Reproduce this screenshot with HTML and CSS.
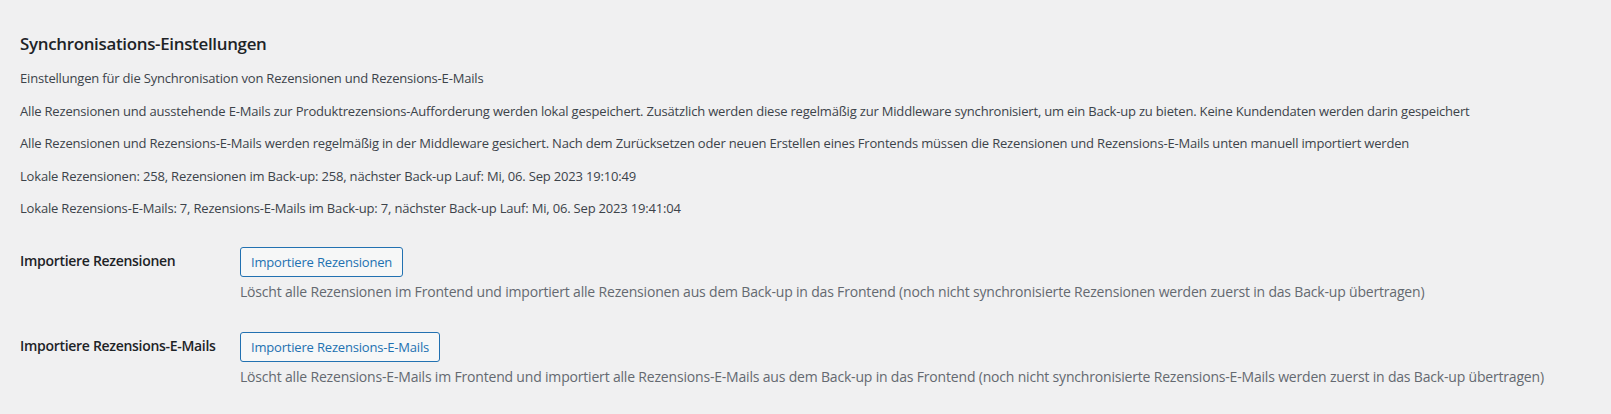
FILE: index.html
```html
<!DOCTYPE html>
<html lang="de">
<head>
<meta charset="utf-8">
<title>Synchronisations-Einstellungen</title>
<link rel="stylesheet" href="styles.css">
</head>
<body>
<div class="wrap">
  <h2 class="title">Synchronisations-Einstellungen</h2>
  <p>Einstellungen für die Synchronisation von Rezensionen und Rezensions-E-Mails</p>
  <p>Alle Rezensionen und ausstehende E-Mails zur Produktrezensions-Aufforderung werden lokal gespeichert. Zusätzlich werden diese regelmäßig zur Middleware synchronisiert, um ein Back-up zu bieten. Keine Kundendaten werden darin gespeichert</p>
  <p>Alle Rezensionen und Rezensions-E-Mails werden regelmäßig in der Middleware gesichert. Nach dem Zurücksetzen oder neuen Erstellen eines Frontends müssen die Rezensionen und Rezensions-E-Mails unten manuell importiert werden</p>
  <p>Lokale Rezensionen: 258, Rezensionen im Back-up: 258, nächster Back-up Lauf: Mi, 06. Sep 2023 19:10:49</p>
  <p>Lokale Rezensions-E-Mails: 7, Rezensions-E-Mails im Back-up: 7, nächster Back-up Lauf: Mi, 06. Sep 2023 19:41:04</p>
  <div class="form-table">
    <div class="row">
      <div class="th">Importiere Rezensionen</div>
      <div class="td">
        <button type="button" class="button">Importiere Rezensionen</button>
        <p class="description">Löscht alle Rezensionen im Frontend und importiert alle Rezensionen aus dem Back-up in das Frontend (noch nicht synchronisierte Rezensionen werden zuerst in das Back-up übertragen)</p>
      </div>
    </div>
    <div class="row">
      <div class="th">Importiere Rezensions-E-Mails</div>
      <div class="td">
        <button type="button" class="button">Importiere Rezensions-E-Mails</button>
        <p class="description">Löscht alle Rezensions-E-Mails im Frontend und importiert alle Rezensions-E-Mails aus dem Back-up in das Frontend (noch nicht synchronisierte Rezensions-E-Mails werden zuerst in das Back-up übertragen)</p>
      </div>
    </div>
  </div>
</div>
</body>
</html>
```

FILE: styles.css
```css
html, body {
  margin: 0;
  padding: 0;
  background: #f0f0f1;
}
body {
  color: #3c434a;
  font-family: "Open Sans", "Noto Sans", sans-serif;
  font-size: 13px;
  line-height: 1.4em;
  letter-spacing: -0.185px;
}
.wrap {
  padding: 0 20px;
  overflow: hidden;
}
.title {
  color: #1d2327;
  font-size: 16.9px;
  font-weight: 600;
  line-height: 22px;
  margin: 33px 0 14px;
  letter-spacing: -0.3px;
}
.wrap > p {
  font-size: 13px;
  line-height: 1.5;
  margin: 13px 0;
}
.form-table {
  margin-top: 6.5px;
  display: flex;
  flex-direction: column;
}
.row {
  display: flex;
}
.th {
  width: 200px;
  flex: none;
  padding: 20px 10px 20px 0;
  color: #1d2327;
  font-size: 14px;
  font-weight: 600;
  line-height: 1.3;
  letter-spacing: -0.3px;
  white-space: nowrap;
}
.td {
  padding: 15px 10px;
  display: flex;
  flex-direction: column;
  align-items: flex-start;
}
.button {
  font-family: inherit;
  font-size: 13px;
  letter-spacing: -0.185px;
  line-height: 28px;
  min-height: 30px;
  margin: 0;
  padding: 0 10px;
  border: 1px solid #2271b1;
  border-radius: 3px;
  background: #f6f7f7;
  color: #2271b1;
  cursor: pointer;
}
.description {
  color: #646970;
  font-size: 14px;
  line-height: 1.5;
  margin: 4px 0 0;
}
```
